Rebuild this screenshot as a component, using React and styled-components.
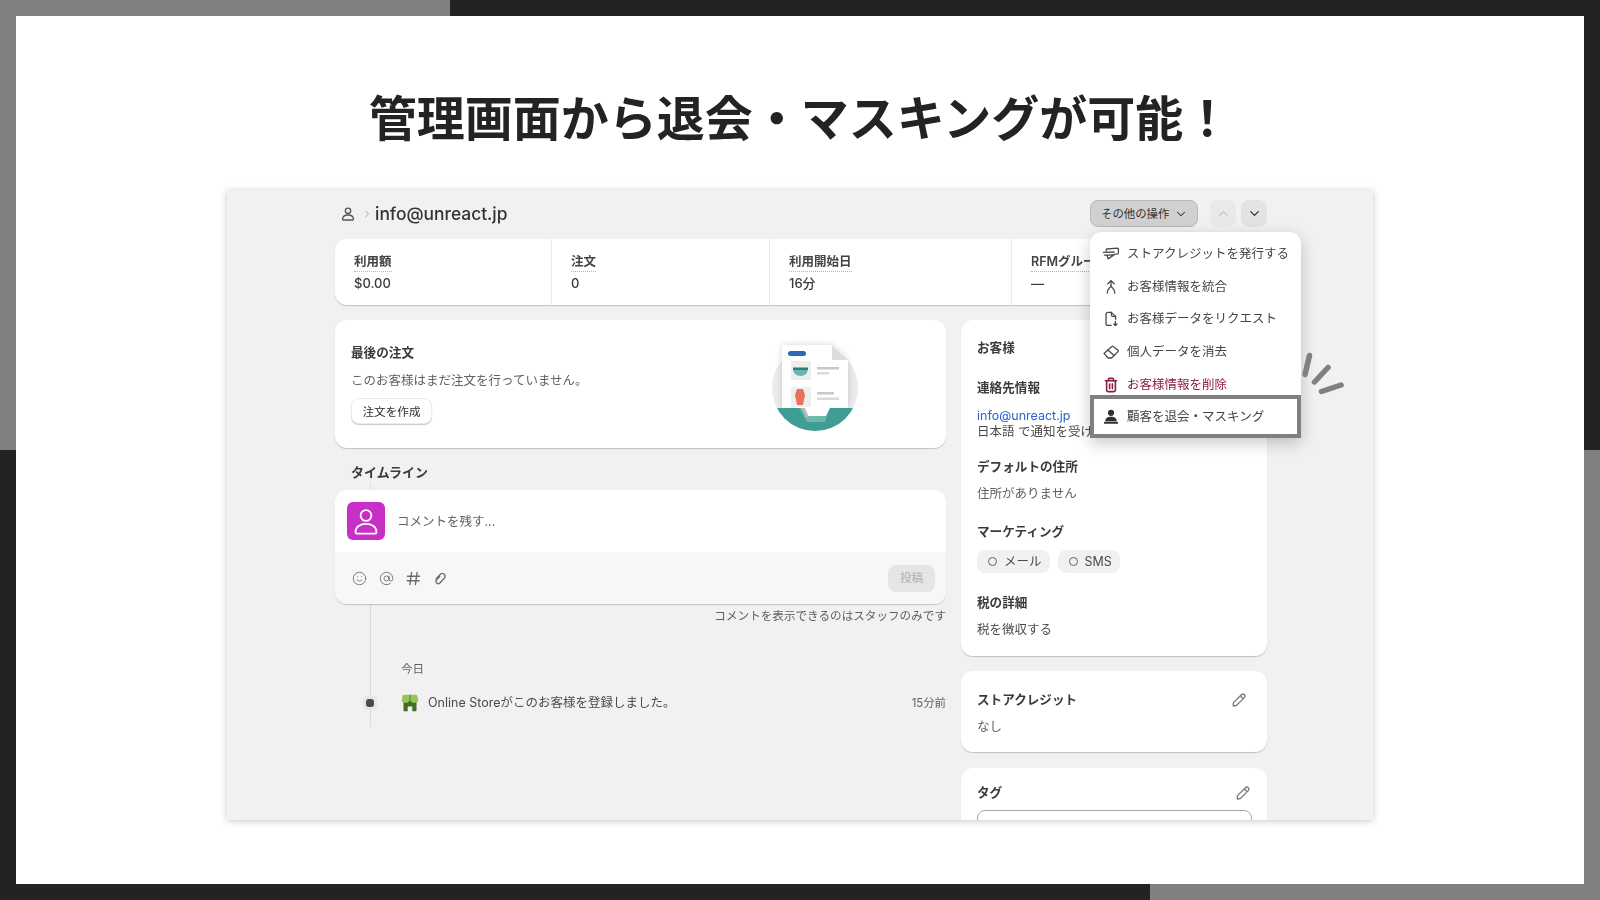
import React from "react";
import styled, { createGlobalStyle } from "styled-components";
import { AtSign, ChevronDown, ChevronRight, ChevronUp, Smile } from "lucide-react";

const GlobalStyle = createGlobalStyle`
  * {
    box-sizing: border-box;
  }
  html,
  body {
    margin: 0;
    padding: 0;
    background: #fff;
  }
  body {
    font-family: Inter, "Noto Sans CJK JP", sans-serif;
    color: #303030;
  }
`;

const DARK = "#232323";
const GREY = "#808080";
const block = `linear-gradient(${GREY}, ${GREY})`;

const Frame = styled.div`
  width: 1600px;
  height: 900px;
  padding: 16px;
  overflow: hidden;
  background: ${block} 0 0 / 450px 16px no-repeat, ${block} 0 0 / 16px 450px no-repeat,
    ${block} 100% 100% / 450px 16px no-repeat, ${block} 100% 100% / 16px 450px no-repeat, ${DARK};
`;

const Slide = styled.div`
  height: 868px;
  padding-top: 67px;
  background: #fff;
  display: flex;
  flex-direction: column;
  align-items: center;
`;

const Title = styled.h1`
  margin: 0;
  font-family: "Noto Sans CJK JP", sans-serif;
  font-size: 48px;
  line-height: 64px;
  font-weight: 700;
  color: ${DARK};
  filter: blur(0.3px);
`;

const Panel = styled.div`
  width: 1146px;
  height: 630px;
  margin-top: 43px;
  padding: 10px 106px 0 108px;
  background: #f1f1f1;
  box-shadow: 0 1px 7px rgba(0, 0, 0, 0.22);
  overflow: hidden;
  font-size: 12.5px;
  line-height: 16px;
  filter: blur(0.35px);
`;

const PageHeader = styled.div`
  height: 27px;
  margin-bottom: 12px;
  display: flex;
  align-items: center;
  justify-content: space-between;
`;

const Crumbs = styled.div`
  display: flex;
  align-items: center;
  color: #555;
  padding-left: 5px;
`;

const Email = styled.span`
  margin-left: 2px;
  font-size: 17.4px;
  font-weight: 550;
  color: #333;
`;

const Actions = styled.div`
  position: relative;
  display: flex;
  align-items: center;
`;

const MoreButton = styled.div`
  width: 108px;
  height: 27px;
  padding-left: 10px;
  margin-right: 12px;
  display: flex;
  align-items: center;
  gap: 5px;
  background: #d0d0d0;
  border: 1px solid #b8b8b8;
  border-radius: 8px;
  font-size: 11.4px;
  color: #303030;
`;

const PagerButton = styled.div`
  width: 26px;
  height: 27px;
  margin-left: ${(p) => (p.$first ? 0 : "5px")};
  display: flex;
  align-items: center;
  justify-content: center;
  border-radius: 8px;
  background: ${(p) => (p.$off ? "#e9e9e9" : "#e3e3e3")};
  color: ${(p) => (p.$off ? "#c4c4c4" : "#303030")};
`;

const Menu = styled.div`
  position: absolute;
  top: 32px;
  left: 0;
  width: 211px;
  padding-top: 5.6px;
  background: #fff;
  border-radius: 12px 12px 0 0;
  box-shadow: 0 5px 16px rgba(0, 0, 0, 0.22);
  z-index: 5;
`;

const MenuRow = styled.div`
  height: 32.7px;
  padding-left: 12px;
  display: flex;
  align-items: center;
  gap: 7px;
  white-space: nowrap;
  color: ${(p) => (p.$danger ? "#8e1f3b" : "#444")};
  svg {
    flex: none;
  }
`;

const HighlightRow = styled(MenuRow)`
  height: 43px;
  margin-top: -6.4px;
  padding: 1px 0 0 8px;
  background: #fff;
  border: 4px solid ${GREY};
  position: relative;
`;

const Sparkle = styled.svg`
  position: absolute;
  left: 211px;
  top: 119px;
`;

const StatsCard = styled.div`
  height: 66px;
  display: grid;
  grid-template-columns: 216px 218px 242px 1fr;
  background: #fff;
  border-radius: 12px;
  box-shadow: 0 1px 1px rgba(0, 0, 0, 0.2);
`;

const Stat = styled.div`
  padding: 13px 0 0 19px;
  border-left: ${(p) => (p.$first ? "none" : "1px solid #ebebeb")};
`;

const StatLabel = styled.span`
  display: inline-block;
  height: 20px;
  line-height: 20px;
  font-weight: 600;
  color: #444;
  border-bottom: 1px dotted #b5b5b5;
`;

const StatValue = styled.div`
  margin-top: 3px;
  font-size: 13px;
  font-weight: 500;
  color: #3a3a3a;
`;

const Columns = styled.div`
  margin-top: 15px;
  display: grid;
  grid-template-columns: 611px 306px;
  column-gap: 15px;
  align-items: start;
`;

const Card = styled.div`
  background: #fff;
  border-radius: 12px;
  box-shadow: 0 1px 1px rgba(0, 0, 0, 0.2);
`;

const OrderCard = styled(Card)`
  height: 128px;
  padding: 23px 81px 0 16px;
  display: flex;
  justify-content: space-between;
`;

const Heading = styled.div`
  font-size: 12.6px;
  line-height: 20px;
  font-weight: 700;
  color: #3a3a3a;
`;

const Muted = styled.div`
  margin-top: ${(p) => p.$top || 0}px;
  color: ${(p) => p.$color || "#616161"};
  white-space: nowrap;
`;

const OutlineButton = styled.div`
  width: 81px;
  height: 26px;
  margin-top: 9px;
  padding-top: 1px;
  display: flex;
  align-items: center;
  justify-content: center;
  background: #fff;
  border: 1px solid #ececec;
  border-radius: 8px;
  box-shadow: 0 1px 1px rgba(0, 0, 0, 0.22);
  font-size: 11.6px;
  color: #303030;
`;

const Illustration = styled.svg`
  flex: none;
  margin-top: -5px;
`;

const TimelineHeading = styled(Heading)`
  margin: 14px 0 0 16px;
  font-size: 13px;
`;

const Timeline = styled.div`
  position: relative;
  height: 245px;
  padding-top: 8px;
  &::before {
    content: "";
    position: absolute;
    left: 35px;
    top: 0;
    bottom: 0;
    width: 1px;
    background: #dcdcdc;
  }
`;

const CommentCard = styled(Card)`
  position: relative;
  overflow: hidden;
`;

const CommentTop = styled.div`
  height: 62px;
  padding: 1px 12px 0;
  display: flex;
  align-items: center;
  gap: 12px;
  color: #616161;
`;

const Avatar = styled.div`
  width: 38px;
  height: 38px;
  margin-top: -1px;
  border-radius: 6px;
  background: #c72fc6;
`;

const CommentBar = styled.div`
  height: 52px;
  padding: 0 11px 0 17px;
  display: flex;
  align-items: center;
  gap: 12px;
  background: #f7f7f7;
  color: #6b6b6b;
`;

const PostButton = styled.div`
  width: 47px;
  height: 27px;
  margin-left: auto;
  display: flex;
  align-items: center;
  justify-content: center;
  border-radius: 8px;
  background: #e5e5e5;
  color: #b0b0b0;
  font-size: 11.6px;
`;

const StaffNote = styled.div`
  position: relative;
  margin-top: 4px;
  text-align: right;
  font-size: 11.6px;
  color: #616161;
`;

const DateLabel = styled.div`
  position: relative;
  margin-top: 37px;
  padding-left: 66px;
  font-size: 11.6px;
  color: #616161;
`;

const EventRow = styled.div`
  position: relative;
  height: 20px;
  margin-top: 16px;
  padding-left: 28px;
  display: flex;
  align-items: center;
  color: #4a4a4a;
`;

const EventDot = styled.div`
  width: 14px;
  height: 14px;
  margin-right: 24px;
  display: flex;
  align-items: center;
  justify-content: center;
  border-radius: 4px;
  background: #e6e6e6;
  &::after {
    content: "";
    width: 8px;
    height: 8px;
    border-radius: 3px;
    background: #4a4a4a;
  }
`;

const EventText = styled.span`
  margin-left: 9px;
`;

const EventTime = styled.span`
  margin-left: auto;
  font-size: 11.4px;
  color: #616161;
`;

const Side = styled.div`
  display: flex;
  flex-direction: column;
  gap: 15px;
`;

const CustomerCard = styled(Card)`
  height: 336px;
  padding: 18px 16px;
`;

const SectionHeading = styled(Heading)`
  margin-top: ${(p) => p.$top || 0}px;
`;

const LinkText = styled.div`
  margin-top: 10px;
  color: #2a62c9;
`;

const Chips = styled.div`
  margin-top: 8px;
  display: flex;
  gap: 8px;
`;

const Chip = styled.div`
  height: 23px;
  padding: 0 8px 0 11px;
  display: flex;
  align-items: center;
  gap: 7px;
  border-radius: 8px;
  background: #f1f1f1;
  color: #4a4a4a;
  &::before {
    content: "";
    width: 7px;
    height: 7px;
    border-radius: 50%;
    border: 1.3px solid #616161;
  }
`;

const CreditCard = styled(Card)`
  height: 81px;
  padding: 19px 20px 0 16px;
`;

const TagCard = styled(Card)`
  height: 80px;
  margin-top: 1px;
  padding: 15px 16px 0 16px;
  border-radius: 12px 12px 0 0;
`;

const TitleRow = styled.div`
  display: flex;
  align-items: center;
  justify-content: space-between;
`;

const TagInput = styled.div`
  height: 40px;
  margin: 7px -1px 0 0;
  border: 1px solid #a8a8a8;
  border-radius: 8px;
`;

const UserIcon = () => (
  <svg width="16" height="16" viewBox="0 0 16 16" fill="none" stroke="currentColor" strokeWidth="1.3">
    <circle cx="8" cy="4.800" r="2.700" />
    <path d="M2.600 13.200c0-2.800 2.400-4.200 5.400-4.200s5.400 1.400 5.400 4.200c0 .5-.3.8-.8.8H3.400c-.5 0-.8-.3-.8-.8z" />
  </svg>
);

const AvatarGlyph = () => (
  <svg width="38" height="38" viewBox="0 0 38 38" fill="none" stroke="#fff" strokeWidth="1.800">
    <circle cx="19" cy="13.500" r="5.400" />
    <path d="M8.500 30c0-5.200 4.600-8.200 10.500-8.200s10.500 3 10.500 8.200c0 1-.7 1.600-1.600 1.600H10.100c-.9 0-1.600-.6-1.600-1.600z" />
  </svg>
);

const PencilIcon = () => (
  <svg width="16" height="16" viewBox="0 0 16 16" fill="none" stroke="#7a7a7a" strokeWidth="1.300" strokeLinejoin="round">
    <path d="M2.200 14l.3-3.400 7.900-7.900a2 2 0 0 1 2.900 2.900l-7.900 7.900z" />
    <path d="M9.300 3.800l2.900 2.900" />
  </svg>
);

const HashIcon = () => (
  <svg width="15" height="15" viewBox="0 0 15 15" fill="none" stroke="currentColor" strokeWidth="1.400" strokeLinecap="round">
    <path d="M5.600 1.500L3.900 13.500M11.100 1.500L9.400 13.500M1.500 5.200h12M1.200 9.800h12" />
  </svg>
);

const ClipIcon = () => (
  <svg width="15" height="15" viewBox="0 0 15 15" fill="none" stroke="currentColor" strokeWidth="1.300" strokeLinecap="round">
    <path d="M6.800 5.200L3.600 8.800a2.300 2.300 0 0 0 3.300 3.200l4.700-5.200a2.800 2.800 0 0 0-4-3.800L3.200 7.600" />
  </svg>
);

const menuStroke = { fill: "none", stroke: "#4a4a4a", strokeWidth: 1.3, strokeLinecap: "round", strokeLinejoin: "round" };

const CreditIcon = () => (
  <svg width="18" height="16" viewBox="0 0 18 16" {...menuStroke}>
    <path d="M4.200 5V3.900c0-.5.3-.8.8-.9l10.400-.9c.6 0 1 .3 1 .9v3.900c0 .5-.3.8-.8.9l-3.400.5" />
    <path d="M1.500 6.400l10.600-.4" />
    <path d="M2.600 9.200l9.400-.3-5.800 4-1.200-3.500" />
  </svg>
);

const MergeIcon = () => (
  <svg width="18" height="16" viewBox="0 0 18 16" {...menuStroke}>
    <path d="M5.800 4.800L9 1.800l3.200 3" />
    <path d="M9 2v5" />
    <path d="M5.200 14.200c0-2.200.6-3.600 2-5 .9-.8 1.800-1.400 1.800-2.400 0 1 .9 1.600 1.800 2.400 1.400 1.400 2 2.800 2 5" />
  </svg>
);

const RequestIcon = () => (
  <svg width="18" height="16" viewBox="0 0 18 16" {...menuStroke}>
    <path d="M9.200 14.400H6a2 2 0 0 1-2-2V3.400a2 2 0 0 1 2-2h3.400" />
    <path d="M9.400 1.400v2.400c0 1 .6 1.600 1.600 1.600h2.600" />
    <path d="M9.400 1.400l4.200 4v2.800" />
    <path d="M13.400 10.400v4.200M11.800 13l1.600 1.600 1.600-1.600" />
  </svg>
);

const EraserIcon = () => (
  <svg width="18" height="16" viewBox="0 0 18 16" {...menuStroke}>
    <path d="M2 9.400L9.800 2.400c.4-.4 1-.4 1.400 0l4.800 3.800c.4.400.4 1 0 1.400L9.600 14H6.200z" />
    <path d="M5.800 6l6 5.200" />
  </svg>
);

const TrashIcon = () => (
  <svg width="18" height="16" viewBox="0 0 18 16" fill="none" stroke="#8e1f3b" strokeWidth="1.600" strokeLinecap="round" strokeLinejoin="round">
    <path d="M3.400 3.800h11.200" />
    <path d="M6.400 3.600V2.600c0-.8.500-1.200 1.200-1.200h2.800c.7 0 1.200.4 1.200 1.200v1" />
    <path d="M4.600 4v9c0 1 .6 1.600 1.600 1.600h5.600c1 0 1.600-.6 1.600-1.600V4" />
    <path d="M7.600 7v4.600M10.400 7v4.600" />
  </svg>
);

const MaskIcon = () => (
  <svg width="18" height="16" viewBox="0 0 18 16" fill="#303030">
    <circle cx="9" cy="3.800" r="3.100" />
    <path d="M3.400 11.600c0-2.500 2.500-3.800 5.600-3.800s5.600 1.300 5.600 3.800v.6H3.400z" />
    <rect x="2" y="12.700" width="14" height="2" rx=".5" />
  </svg>
);

const StoreIcon = () => (
  <svg width="18" height="18" viewBox="0 0 18 18">
    <path d="M2.500 7h13v9.200a1 1 0 0 1-1 1h-3.200v-4.700H6.700v4.700H3.500a1 1 0 0 1-1-1z" fill="#3f6f22" />
    <path d="M3.400.8h4.400v6.100c0 1.100-.9 1.900-2 1.900H3.200C1.800 8.800.6 7.800.8 6.300l.6-3.900C1.600 1.400 2.400.8 3.400.8z" fill="#95c65a" />
    <path d="M14.600.8h-4.400v6.100c0 1.100.9 1.900 2 1.900h2.600c1.400 0 2.600-1 2.400-2.500l-.6-3.900C16.400 1.400 15.600.8 14.600.8z" fill="#95c65a" />
    <rect x="7.800" y=".8" width="2.400" height="6.400" fill="#6fa53f" />
  </svg>
);

const OrderArt = () => (
  <Illustration width="100" height="100" viewBox="0 0 100 100">
    <defs>
      <clipPath id="art-circle">
        <circle cx="50" cy="50" r="43" />
      </clipPath>
      <filter id="art-shadow" x="-20%" y="-20%" width="140%" height="140%">
        <feDropShadow dx="0" dy="0" stdDeviation="3" floodColor="#000" floodOpacity="0.16" />
      </filter>
    </defs>
    <circle cx="50" cy="50" r="43" fill="#ebebeb" />
    <path d="M17 7h50l16 15v48H65l-3 11H41l-4-11H17z" fill="#fff" filter="url(#art-shadow)" />
    <g clipPath="url(#art-circle)">
      <rect x="0" y="70" width="100" height="30" fill="#3f9d93" />
      <path d="M34 70h30l-4 14H42z" fill="#6fb8af" />
    </g>
    <path d="M37 70l5 8h19l4-8z" fill="#fff" />
    <path d="M37 70l4 9h3l-4-9z" fill="#bdbdbd" />
    <path d="M67 7l16 15H67z" fill="#dcdcdc" />
    <rect x="23" y="13" width="18" height="5" rx="2.500" fill="#2f66b5" />
    <rect x="26" y="23" width="20" height="19" fill="#eeeeee" />
    <path d="M28 30h15c0 5-3 8-7.500 8S28 35 28 30z" fill="#67b8b4" />
    <rect x="28" y="29.500" width="15" height="2.500" fill="#2f7d78" />
    <rect x="52" y="29" width="22" height="2.500" fill="#c8c8c8" />
    <rect x="52" y="34" width="12" height="2.500" fill="#dadada" />
    <rect x="26" y="49" width="20" height="20" fill="#eeeeee" />
    <path d="M32 51h6l2 6-2 10h-6l-2-10z" fill="#e8735a" />
    <rect x="52" y="54" width="17" height="2.500" fill="#c8c8c8" />
    <rect x="52" y="59.500" width="22" height="2.500" fill="#dadada" />
  </Illustration>
);

const menuItems = [
  { icon: <CreditIcon />, label: "ストアクレジットを発行する" },
  { icon: <MergeIcon />, label: "お客様情報を統合" },
  { icon: <RequestIcon />, label: "お客様データをリクエスト" },
  { icon: <EraserIcon />, label: "個人データを消去" },
  { icon: <TrashIcon />, label: "お客様情報を削除", danger: true },
];

const stats = [
  { label: "利用額", value: "$0.00" },
  { label: "注文", value: "0" },
  { label: "利用開始日", value: "16分" },
  { label: "RFMグループ", value: "—" },
];

const App = () => (
  <>
    <GlobalStyle />
    <Frame>
      <Slide>
        <Title>管理画面から退会・マスキングが可能！</Title>
        <Panel>
          <PageHeader>
            <Crumbs>
              <UserIcon />
              <ChevronRight size={12} strokeWidth={1.4} color="#8a8a8a" style={{ marginLeft: 5 }} />
              <Email>info@unreact.jp</Email>
            </Crumbs>
            <Actions>
              <MoreButton>
                その他の操作
                <ChevronDown size={14} strokeWidth={1.8} />
              </MoreButton>
              <PagerButton $first $off>
                <ChevronUp size={15} strokeWidth={2} />
              </PagerButton>
              <PagerButton>
                <ChevronDown size={15} strokeWidth={2} />
              </PagerButton>
              <Menu>
                {menuItems.map((item) => (
                  <MenuRow key={item.label} $danger={item.danger}>
                    {item.icon}
                    {item.label}
                  </MenuRow>
                ))}
                <HighlightRow>
                  <MaskIcon />
                  顧客を退会・マスキング
                </HighlightRow>
                <Sparkle width="48" height="50" viewBox="0 0 48 50" fill="none" stroke={GREY} strokeWidth="5.500" strokeLinecap="round">
                  <path d="M8.500 4.500L4 23.500" />
                  <path d="M27 16.500L13.500 31" />
                  <path d="M40 34L20.500 40.500" />
                </Sparkle>
              </Menu>
            </Actions>
          </PageHeader>

          <StatsCard>
            {stats.map((s, i) => (
              <Stat key={s.label} $first={i === 0}>
                <StatLabel>{s.label}</StatLabel>
                <StatValue>{s.value}</StatValue>
              </Stat>
            ))}
          </StatsCard>

          <Columns>
            <div>
              <OrderCard>
                <div>
                  <Heading>最後の注文</Heading>
                  <Muted $top={10}>このお客様はまだ注文を行っていません。</Muted>
                  <OutlineButton>注文を作成</OutlineButton>
                </div>
                <OrderArt />
              </OrderCard>

              <TimelineHeading>タイムライン</TimelineHeading>
              <Timeline>
                <CommentCard>
                  <CommentTop>
                    <Avatar>
                      <AvatarGlyph />
                    </Avatar>
                    コメントを残す...
                  </CommentTop>
                  <CommentBar>
                    <Smile size={15} strokeWidth={1.4} />
                    <AtSign size={15} strokeWidth={1.4} />
                    <HashIcon />
                    <ClipIcon />
                    <PostButton>投稿</PostButton>
                  </CommentBar>
                </CommentCard>
                <StaffNote>コメントを表示できるのはスタッフのみです</StaffNote>
                <DateLabel>今日</DateLabel>
                <EventRow>
                  <EventDot />
                  <StoreIcon />
                  <EventText>Online Storeがこのお客様を登録しました。</EventText>
                  <EventTime>15分前</EventTime>
                </EventRow>
              </Timeline>
            </div>

            <Side>
              <CustomerCard>
                <Heading>お客様</Heading>
                <SectionHeading $top={20}>連絡先情報</SectionHeading>
                <LinkText>info@unreact.jp</LinkText>
                <Muted $color="#4a4a4a">日本語 で通知を受け取ります</Muted>
                <SectionHeading $top={17}>デフォルトの住所</SectionHeading>
                <Muted $top={9}>住所がありません</Muted>
                <SectionHeading $top={20}>マーケティング</SectionHeading>
                <Chips>
                  <Chip>メール</Chip>
                  <Chip>SMS</Chip>
                </Chips>
                <SectionHeading $top={20}>税の詳細</SectionHeading>
                <Muted $top={9} $color="#4a4a4a">税を徴収する</Muted>
              </CustomerCard>
              <CreditCard>
                <TitleRow>
                  <Heading>ストアクレジット</Heading>
                  <PencilIcon />
                </TitleRow>
                <Muted $top={9}>なし</Muted>
              </CreditCard>
              <TagCard>
                <TitleRow>
                  <Heading>タグ</Heading>
                  <PencilIcon />
                </TitleRow>
                <TagInput />
              </TagCard>
            </Side>
          </Columns>
        </Panel>
      </Slide>
    </Frame>
  </>
);

export default App;
